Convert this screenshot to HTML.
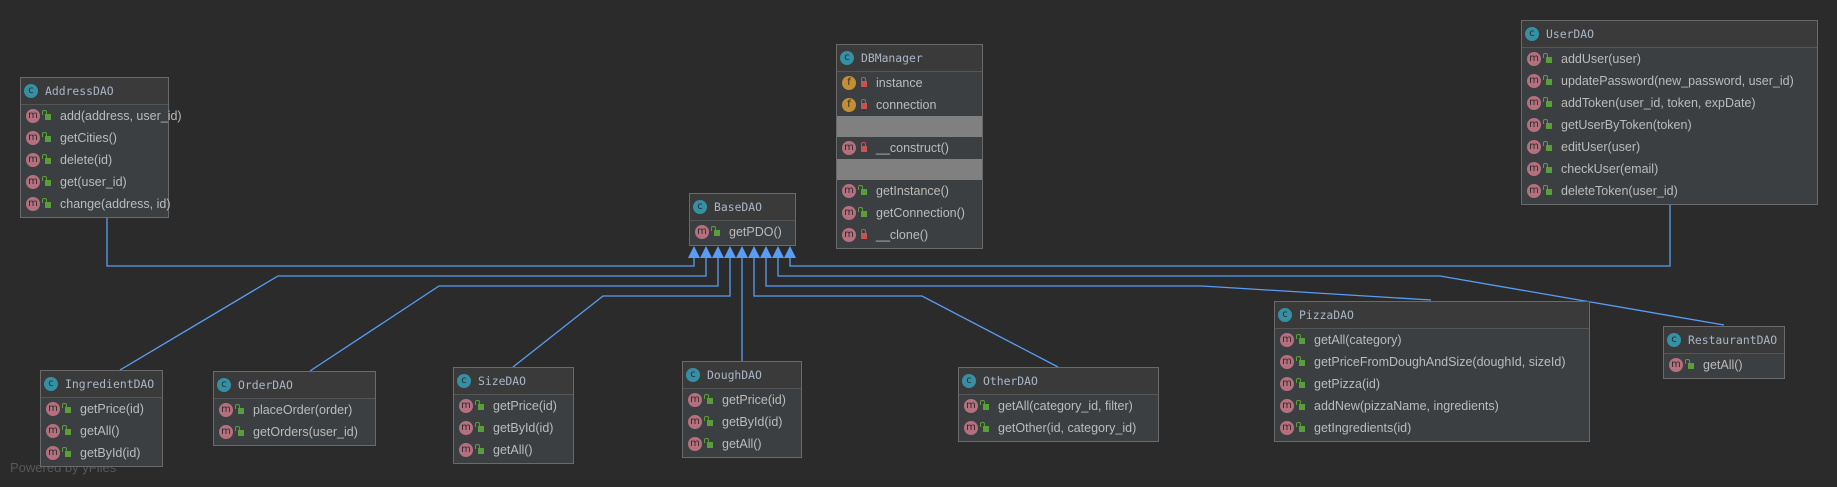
<!DOCTYPE html>
<html><head><meta charset="utf-8"><style>
*{margin:0;padding:0;box-sizing:border-box}
body{width:1837px;height:487px;background:#2b2b2b;position:relative;overflow:hidden;font-family:"Liberation Sans","DejaVu Sans",sans-serif}
.pw{position:absolute;left:10px;top:460px;font-size:13px;color:#585858}
.b{position:absolute;border:1px solid #6a6a6a;background:#3c3f41}
.h{height:27px;background:#3a3a3a;border-bottom:1px solid #555;position:relative;font-family:"DejaVu Sans Mono","Liberation Mono",monospace;font-size:11.4px;color:#a9b7c6;line-height:26px;padding-left:24px;white-space:nowrap}
.ic{position:absolute;width:14px;height:14px;border-radius:50%;font-family:"DejaVu Sans",sans-serif;font-size:10px;line-height:13px;text-align:center;color:#2b2b2b}
.h .ic{left:3px;top:6px;background:#3590a5}
.r{height:22px;position:relative;font-size:12.5px;color:#bbbbbb;line-height:22px;padding-left:39px;white-space:nowrap}
.r .ic{left:5px;top:4px;background:#b5707f}
.r .ic.f{background:#c48e34}
.lk{position:absolute;left:24px;top:9px;width:6px;height:6px;background:#5a9e3a}
.lk:before{content:"";position:absolute;left:-3px;top:-4px;width:3px;height:4px;border:1.5px solid #5a9e3a;border-bottom:none;border-radius:2px 2px 0 0}
.lk.p{background:#c75450}.lk.p:before{left:0;border-color:#c75450}
.g{height:21px;background:#808080}
.rows{padding-bottom:2px}
</style></head><body>
<div class="pw">Powered by yFiles</div>
<svg width="1837" height="487" style="position:absolute;left:0;top:0" fill="none" stroke="#589df6" stroke-width="1.3">
<polyline points="107,217 107,266 694,266 694,258"/>
<polyline points="120,370 278,276 706,276 706,258"/>
<polyline points="310,371 439,286 718,286 718,258"/>
<polyline points="513,367 603,296 730,296 730,258"/>
<polyline points="742,361 742,258"/>
<polyline points="1058,367 922,296 754,296 754,258"/>
<polyline points="1431,300 1202,286 766,286 766,258"/>
<polyline points="1724,325 1440,276 778,276 778,258"/>
<polyline points="1670,204 1670,266 790,266 790,258"/>
<g fill="#589df6" stroke="none">
<polygon points="694,246 688,258 700,258"/><polygon points="706,246 700,258 712,258"/><polygon points="718,246 712,258 724,258"/><polygon points="730,246 724,258 736,258"/><polygon points="742,246 736,258 748,258"/><polygon points="754,246 748,258 760,258"/><polygon points="766,246 760,258 772,258"/><polygon points="778,246 772,258 784,258"/><polygon points="790,246 784,258 796,258"/>
</g></svg>

<div class="b" style="left:20px;top:77px;width:149px"><div class="h"><span class="ic">c</span>AddressDAO</div><div class="rows">
<div class="r"><span class="ic">m</span><span class="lk"></span>add(address, user_id)</div>
<div class="r"><span class="ic">m</span><span class="lk"></span>getCities()</div>
<div class="r"><span class="ic">m</span><span class="lk"></span>delete(id)</div>
<div class="r"><span class="ic">m</span><span class="lk"></span>get(user_id)</div>
<div class="r"><span class="ic">m</span><span class="lk"></span>change(address, id)</div></div></div>

<div class="b" style="left:836px;top:44px;width:147px"><div class="h"><span class="ic">c</span>DBManager</div>
<div class="r"><span class="ic f">f</span><span class="lk p"></span>instance</div>
<div class="r"><span class="ic f">f</span><span class="lk p"></span>connection</div>
<div class="g"></div>
<div class="r"><span class="ic">m</span><span class="lk p"></span>__construct()</div>
<div class="g"></div><div class="rows">
<div class="r"><span class="ic">m</span><span class="lk"></span>getInstance()</div>
<div class="r"><span class="ic">m</span><span class="lk"></span>getConnection()</div>
<div class="r"><span class="ic">m</span><span class="lk p"></span>__clone()</div></div></div>

<div class="b" style="left:1521px;top:20px;width:297px"><div class="h"><span class="ic">c</span>UserDAO</div><div class="rows">
<div class="r"><span class="ic">m</span><span class="lk"></span>addUser(user)</div>
<div class="r"><span class="ic">m</span><span class="lk"></span>updatePassword(new_password, user_id)</div>
<div class="r"><span class="ic">m</span><span class="lk"></span>addToken(user_id, token, expDate)</div>
<div class="r"><span class="ic">m</span><span class="lk"></span>getUserByToken(token)</div>
<div class="r"><span class="ic">m</span><span class="lk"></span>editUser(user)</div>
<div class="r"><span class="ic">m</span><span class="lk"></span>checkUser(email)</div>
<div class="r"><span class="ic">m</span><span class="lk"></span>deleteToken(user_id)</div></div></div>

<div class="b" style="left:689px;top:193px;width:107px"><div class="h"><span class="ic">c</span>BaseDAO</div><div class="rows">
<div class="r"><span class="ic">m</span><span class="lk"></span>getPDO()</div></div></div>

<div class="b" style="left:40px;top:370px;width:123px"><div class="h"><span class="ic">c</span>IngredientDAO</div><div class="rows">
<div class="r"><span class="ic">m</span><span class="lk"></span>getPrice(id)</div>
<div class="r"><span class="ic">m</span><span class="lk"></span>getAll()</div>
<div class="r"><span class="ic">m</span><span class="lk"></span>getById(id)</div></div></div>

<div class="b" style="left:213px;top:371px;width:163px"><div class="h"><span class="ic">c</span>OrderDAO</div><div class="rows">
<div class="r"><span class="ic">m</span><span class="lk"></span>placeOrder(order)</div>
<div class="r"><span class="ic">m</span><span class="lk"></span>getOrders(user_id)</div></div></div>

<div class="b" style="left:453px;top:367px;width:121px"><div class="h"><span class="ic">c</span>SizeDAO</div><div class="rows">
<div class="r"><span class="ic">m</span><span class="lk"></span>getPrice(id)</div>
<div class="r"><span class="ic">m</span><span class="lk"></span>getById(id)</div>
<div class="r"><span class="ic">m</span><span class="lk"></span>getAll()</div></div></div>

<div class="b" style="left:682px;top:361px;width:120px"><div class="h"><span class="ic">c</span>DoughDAO</div><div class="rows">
<div class="r"><span class="ic">m</span><span class="lk"></span>getPrice(id)</div>
<div class="r"><span class="ic">m</span><span class="lk"></span>getById(id)</div>
<div class="r"><span class="ic">m</span><span class="lk"></span>getAll()</div></div></div>

<div class="b" style="left:958px;top:367px;width:201px"><div class="h"><span class="ic">c</span>OtherDAO</div><div class="rows">
<div class="r"><span class="ic">m</span><span class="lk"></span>getAll(category_id, filter)</div>
<div class="r"><span class="ic">m</span><span class="lk"></span>getOther(id, category_id)</div></div></div>

<div class="b" style="left:1274px;top:301px;width:316px"><div class="h"><span class="ic">c</span>PizzaDAO</div><div class="rows">
<div class="r"><span class="ic">m</span><span class="lk"></span>getAll(category)</div>
<div class="r"><span class="ic">m</span><span class="lk"></span>getPriceFromDoughAndSize(doughId, sizeId)</div>
<div class="r"><span class="ic">m</span><span class="lk"></span>getPizza(id)</div>
<div class="r"><span class="ic">m</span><span class="lk"></span>addNew(pizzaName, ingredients)</div>
<div class="r"><span class="ic">m</span><span class="lk"></span>getIngredients(id)</div></div></div>

<div class="b" style="left:1663px;top:326px;width:122px"><div class="h"><span class="ic">c</span>RestaurantDAO</div><div class="rows">
<div class="r"><span class="ic">m</span><span class="lk"></span>getAll()</div></div></div>
</body></html>
